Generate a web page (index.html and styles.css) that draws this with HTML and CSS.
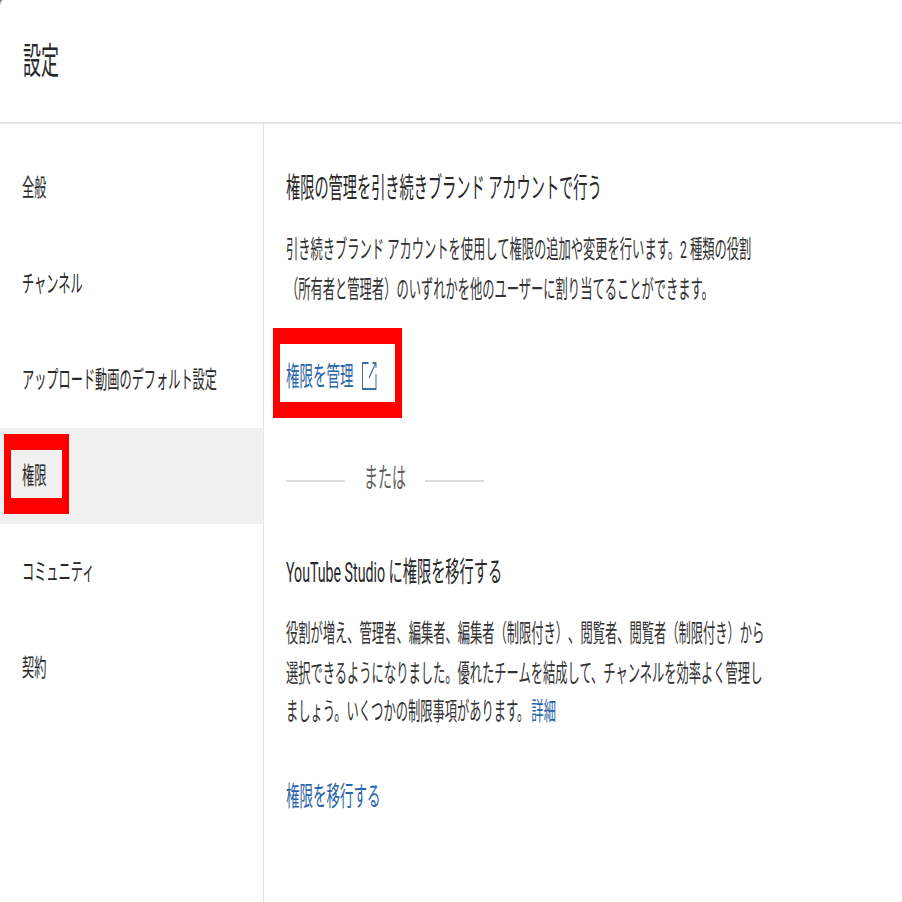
FILE: index.html
```html
<!DOCTYPE html>
<html lang="ja">
<head>
<meta charset="utf-8">
<title>設定</title>
<link rel="stylesheet" href="styles.css">
</head>
<body>
<div class="page">
  <header class="header"><h1 class="title">設定</h1></header>
  <div class="layout">
    <nav class="sidebar">
      <div class="item">全般</div>
      <div class="item">チャンネル</div>
      <div class="item">アップロード動画のデフォルト設定</div>
      <div class="item active"><span class="mark mark-nav"></span>権限</div>
      <div class="item">コミュニティ</div>
      <div class="item">契約</div>
    </nav>
    <main class="main">
      <h2 class="heading">権限の管理を引き続きブランド アカウントで行う</h2>
      <p class="para">引き続きブランド アカウントを使用して権限の追加や変更を行います。2 種類の役割（所有者と管理者）のいずれかを他のユーザーに割り当てることができます。</p>
      <a class="link manage"><span class="mark mark-link"></span>権限を管理<svg class="ext" viewBox="0 0 15 14" width="15" height="14"><path d="M6.5 .5H.5V13.5H14V6M7 8 13.5 .7M10.5 .5H14V3" fill="none" stroke="currentColor" stroke-width="1"/></svg></a>
      <div class="or"><span class="rule"></span><span class="or-text">または</span><span class="rule"></span></div>
      <h2 class="heading second">YouTube Studio に権限を移行する</h2>
      <p class="para para-long">役割が増え、管理者、編集者、編集者（制限付き）、閲覧者、閲覧者（制限付き）から選択できるようになりました。優れたチームを結成して、チャンネルを効率よく管理しましょう。いくつかの制限事項があります。<a class="link more">詳細</a></p>
      <a class="link migrate">権限を移行する</a>
    </main>
  </div>
</div>
</body>
</html>
```
FILE: styles.css
```css
html, body { margin: 0; padding: 0; background: #777; overflow: hidden; height: 902px; }
.page {
  width: 902px; height: 451px;
  background: #fff;
  border-top-left-radius: 3px;
  transform: scaleY(2); transform-origin: 0 0;
  font-family: Roboto, "Noto Sans CJK JP", sans-serif;
  text-spacing-trim: space-all;
  color: #282828;
  display: flex; flex-direction: column;
}
.header { height: 61px; border-bottom: 1px solid #e5e5e5; padding-left: 23px; display: flex; align-items: center; }
.title { margin: 0; font-size: 18px; font-weight: 400; line-height: 24px; }
.layout { flex: 1; display: flex; min-height: 0; }
.sidebar { width: 263px; border-right: 1px solid #e5e5e5; padding-top: 8px; flex: none; }
.item { position: relative; height: 48px; line-height: 48px; padding-left: 22px; font-size: 12.2px; }
.active { background: #f0f0f0; }
.mark { position: absolute; border: solid #f00; border-width: 8px 7px; box-sizing: border-box; }
.mark-nav { left: 4px; top: 3px; width: 65px; height: 40px; }
.mark-link { left: -13px; top: -10px; width: 129px; height: 45px; }
.main { padding: 19.5px 0 0 22px; width: 490px; }
.heading { margin: 0; font-size: 14.2px; font-weight: 400; line-height: 24px; color: #282828; }
.para { margin: 10.5px 0 0; font-size: 12.27px; line-height: 19.5px; color: #333; width: 475px; }
.link { color: #2a64a8; }
.manage { position: relative; display: inline-flex; align-items: center; margin-top: 18.5px; font-size: 13.5px; line-height: 29px; }
.ext { margin-left: 8px; color: #3f6f9f; }
.or { display: flex; align-items: center; margin-top: 25.5px; width: 198px; height: 20px; }
.rule { flex: none; width: 59px; border-top: 1px solid #ddd; margin-top: 5px; }
.or-text { width: 80px; text-align: center; font-size: 14px; color: #606060; }
.second { margin-top: 25.5px; }
.para-long { margin-top: 10.5px; width: 480px; }
.more { margin-left: 2px; }
.migrate { display: block; margin-top: 19px; font-size: 13.5px; line-height: 24px; }
```
